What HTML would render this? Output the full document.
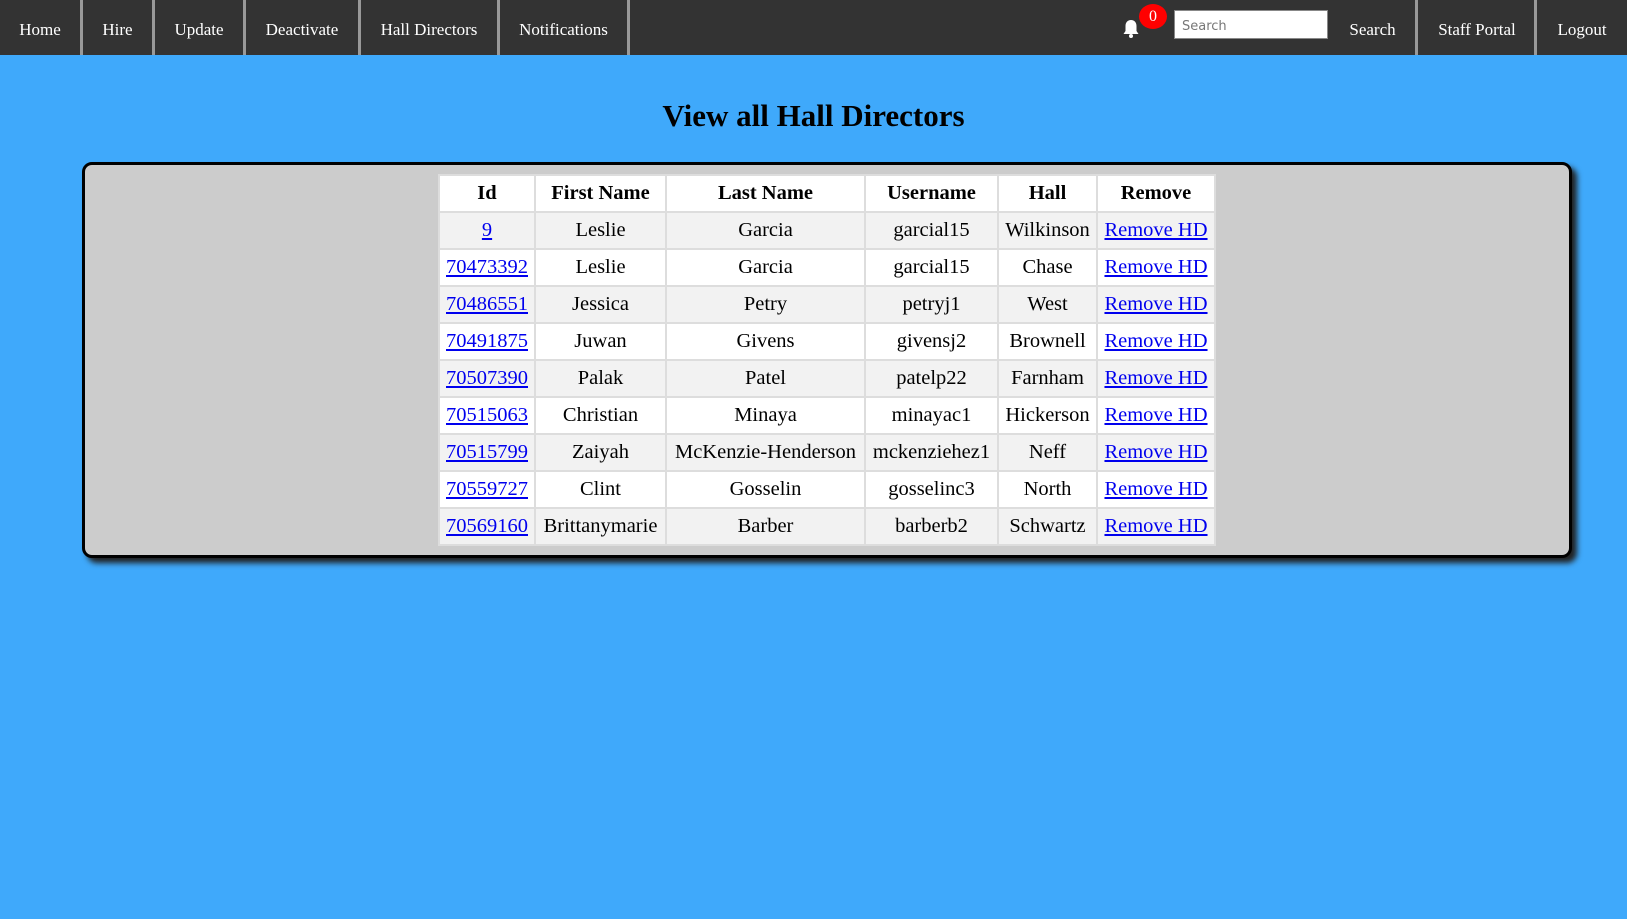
<!DOCTYPE html>
<html><head><meta charset="utf-8"><style>
*{box-sizing:border-box}
body{margin:0;width:1627px;height:919px;background:#3fa9fb;font-family:"Liberation Serif",serif;overflow:hidden}
.nav{position:absolute;left:0;top:0;width:1627px;height:55px;background:#333}
.nav a{position:absolute;top:0;height:55px;line-height:59px;color:#fff;font-size:17px;text-align:center;text-decoration:none;border-right:3px solid #999}
.nav a.r{border-right:none;border-left:3px solid #999}
h1{position:absolute;left:0;width:1627px;top:96px;margin:0;text-align:center;font-size:31px;font-weight:bold;line-height:40px}
.box{position:absolute;left:82px;top:162px;width:1490px;height:396px;background:#ccc;border:3px solid #000;border-radius:10px;box-shadow:5px 5px 6px #222}
table{position:absolute;left:353px;top:9px;border-collapse:separate;border-spacing:2px;background:#ddd;font-size:20.5px}
td,th{height:35px;text-align:center;padding:0 4px;background:#f2f2f2;white-space:nowrap}
th{background:#fff;font-weight:bold}
tr:nth-child(odd) td{background:#fff}
a.l{color:#00e;text-decoration:underline}
</style></head><body>
<div class="nav">
<a style="left:0;width:83px">Home</a>
<a style="left:83px;width:72px">Hire</a>
<a style="left:155px;width:91px">Update</a>
<a style="left:246px;width:115px">Deactivate</a>
<a style="left:361px;width:139px">Hall Directors</a>
<a style="left:500px;width:130px">Notifications</a>
<svg style="position:absolute;left:1122px;top:19px" width="18" height="20" viewBox="0 0 18 20"><path d="M9 1c-3.5 0-5.5 2.5-5.5 6v5L1.5 15h15L14.5 12V7C14.5 3.5 12.5 1 9 1z" fill="#fff"/><circle cx="9" cy="17" r="2" fill="#fff"/></svg>
<div style="position:absolute;left:1139px;top:4px;width:28px;height:25px;border-radius:50%;background:#f00;color:#fff;font-size:16px;text-align:center;line-height:25px">0</div>
<div style="position:absolute;left:1174px;top:10px;width:154px;height:29px;background:#fff;border:1px solid #888;font-family:'DejaVu Sans',sans-serif;font-size:13px;color:#777;padding:8px 7px 0">Search</div>
<a style="left:1330px;width:85px;border:none">Search</a>
<a class="r" style="left:1415px;width:121px">Staff Portal</a>
<a class="r" style="left:1534px;width:93px">Logout</a>
</div>
<h1>View all Hall Directors</h1>
<div class="box">
<table>
<tr><th style="width:94px">Id</th><th style="width:129px">First Name</th><th style="width:197px">Last Name</th><th style="width:131px">Username</th><th style="width:97px">Hall</th><th style="width:116px">Remove</th></tr>
<tr><td><a class="l">9</a></td><td>Leslie</td><td>Garcia</td><td>garcial15</td><td>Wilkinson</td><td><a class="l">Remove HD</a></td></tr>
<tr><td><a class="l">70473392</a></td><td>Leslie</td><td>Garcia</td><td>garcial15</td><td>Chase</td><td><a class="l">Remove HD</a></td></tr>
<tr><td><a class="l">70486551</a></td><td>Jessica</td><td>Petry</td><td>petryj1</td><td>West</td><td><a class="l">Remove HD</a></td></tr>
<tr><td><a class="l">70491875</a></td><td>Juwan</td><td>Givens</td><td>givensj2</td><td>Brownell</td><td><a class="l">Remove HD</a></td></tr>
<tr><td><a class="l">70507390</a></td><td>Palak</td><td>Patel</td><td>patelp22</td><td>Farnham</td><td><a class="l">Remove HD</a></td></tr>
<tr><td><a class="l">70515063</a></td><td>Christian</td><td>Minaya</td><td>minayac1</td><td>Hickerson</td><td><a class="l">Remove HD</a></td></tr>
<tr><td><a class="l">70515799</a></td><td>Zaiyah</td><td>McKenzie-Henderson</td><td>mckenziehez1</td><td>Neff</td><td><a class="l">Remove HD</a></td></tr>
<tr><td><a class="l">70559727</a></td><td>Clint</td><td>Gosselin</td><td>gosselinc3</td><td>North</td><td><a class="l">Remove HD</a></td></tr>
<tr><td><a class="l">70569160</a></td><td>Brittanymarie</td><td>Barber</td><td>barberb2</td><td>Schwartz</td><td><a class="l">Remove HD</a></td></tr>
</table>
</div>
</body></html>
